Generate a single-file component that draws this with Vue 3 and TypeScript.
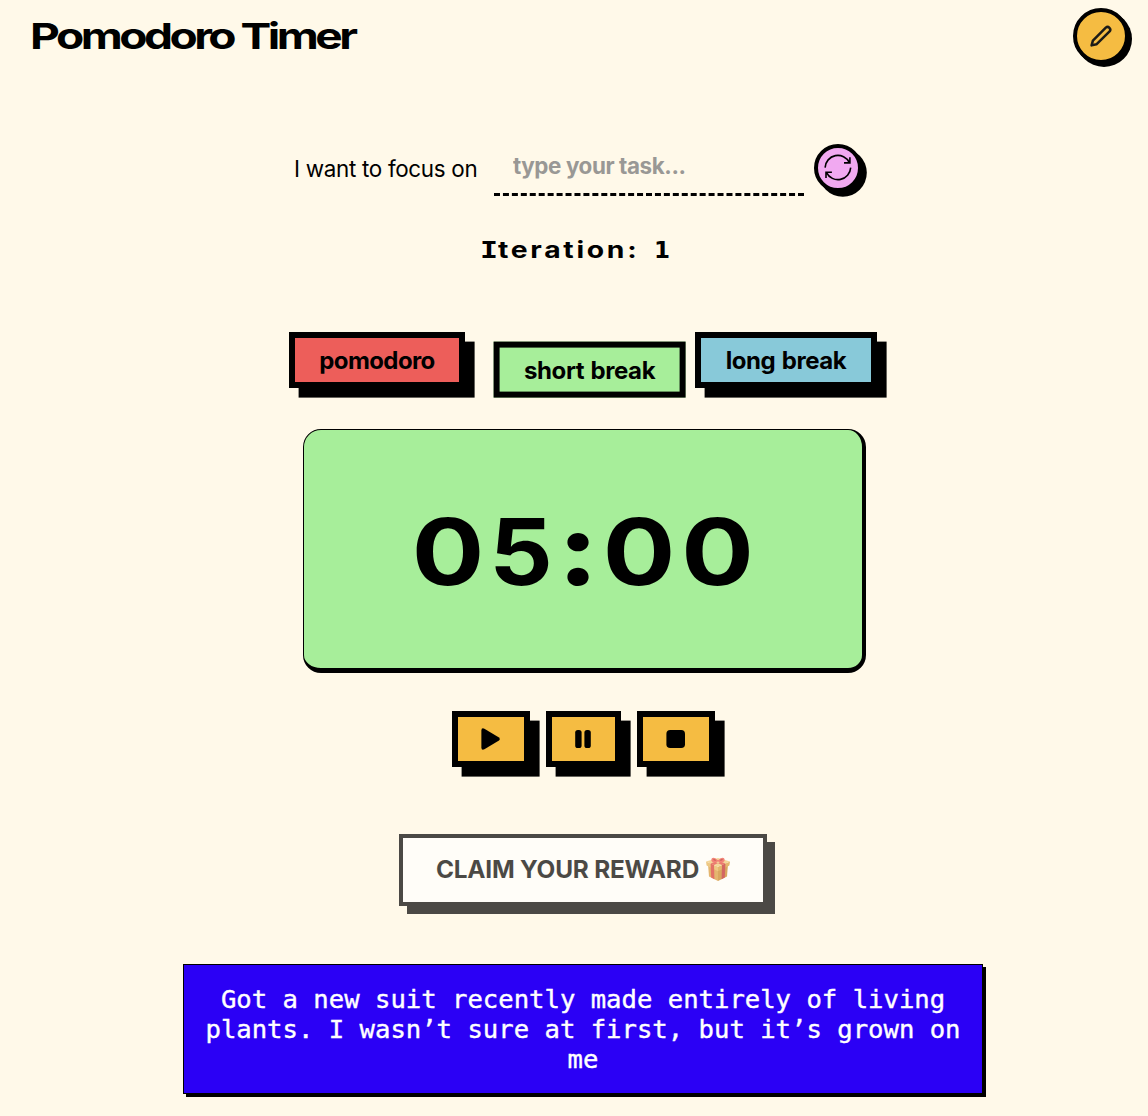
<script setup lang="ts">
import { ref } from 'vue'

type Mode = { id: string; label: string; color: string; width: number }

const modes: Mode[] = [
  { id: 'pomodoro', label: 'pomodoro', color: '#ed5e5a', width: 176 },
  { id: 'short', label: 'short break', color: '#a7ee9a', width: 192 },
  { id: 'long', label: 'long break', color: '#88c9d9', width: 182 },
]
const active = ref('short')
const task = ref('')
const iteration = ref(1)
const joke =
  'Got a new suit recently made entirely of living plants. I wasn’t sure at first, but it’s grown on me'
</script>

<template>
  <div class="page">
    <header class="header">
      <h1 class="title">Pomodoro Timer</h1>
      <button class="edit" aria-label="Edit">
        <svg width="28" height="28" viewBox="0 0 28 28" fill="none" stroke="#1c1b18" stroke-width="2.5" stroke-linejoin="round" stroke-linecap="round">
          <path d="M4.6 23.4 L5.9 18.6 L18.8 5.6 A2.7 2.7 0 0 1 22.6 9.4 L9.4 22.3 Z" />
        </svg>
      </button>
    </header>

    <main class="main">
      <div class="focus">
        <label class="focus-label" for="task">I want to focus on</label>
        <input id="task" v-model="task" class="task" placeholder="type your task..." />
        <button class="refresh" aria-label="Reset">
          <svg width="30" height="30" viewBox="0 0 30 30" fill="none" stroke="#000" stroke-width="1.6">
            <path d="M2.1 14.6 A12.8 12.8 0 0 1 26.4 9.6 M26.9 4.2 V9.9 H21" />
            <path d="M27.7 14.6 A12.8 12.8 0 0 1 3.5 19.6 M3 25 V19.3 H8.9" />
          </svg>
        </button>
      </div>

      <h2 class="iteration">
        <span class="slab">I</span><span class="word">teration:</span><span class="count">{{ iteration }}</span>
      </h2>

      <div class="modes">
        <button
          v-for="m in modes"
          :key="m.id"
          class="block mode"
          :class="[m.id, { pressed: active === m.id }]"
          :style="{ background: m.color, width: m.width + 'px' }"
          @click="active = m.id"
        >{{ m.label }}</button>
      </div>

      <div class="card">
        <span class="d zero">0</span><span class="d five">5</span><span class="d colon">:</span><span class="d zero mid">0</span><span class="d zero last">0</span>
      </div>

      <div class="controls">
        <button class="block control" aria-label="Play">
          <svg width="20" height="24" viewBox="0 0 20 24"><path d="M.4 3.6 Q.4 .4 3.4 1.8 L17.6 10.2 Q20 12 17.6 13.8 L3.4 22.2 Q.4 23.6 .4 20.4 Z" /></svg>
        </button>
        <button class="block control narrow" aria-label="Pause">
          <svg width="20" height="24" viewBox="0 0 20 24"><rect x="2.2" y="3" width="6.4" height="18" rx="2.6" /><rect x="11.4" y="3" width="6.4" height="18" rx="2.6" /></svg>
        </button>
        <button class="block control" aria-label="Stop">
          <svg width="20" height="24" viewBox="0 0 20 24"><rect x=".4" y="3" width="18.6" height="18" rx="3.8" /></svg>
        </button>
      </div>

      <button class="claim" disabled>
        <span class="claim-text">CLAIM YOUR REWARD</span>
        <svg class="gift" width="24" height="24" viewBox="0 0 24 24">
          <path d="M2 7 L12 12 V24 L3 19.5 Z" fill="#d99a3c" />
          <path d="M22 7 L12 12 V24 L21 19.5 Z" fill="#c98526" />
          <path d="M0 4.6 L12 9.8 V14.2 L.6 8.6 Z" fill="#e8b458" />
          <path d="M24 4.6 L12 9.8 V14.2 L23.4 8.6 Z" fill="#d99c3a" />
          <path d="M0 4.6 L12 1 L24 4.6 L12 9.8 Z" fill="#f0c878" />
          <path d="M4.6 6.6 L8 8.1 L8.4 22.2 L5.2 20.6 Z" fill="#d8392f" />
          <path d="M19.4 6.6 L16 8.1 L15.6 22.2 L18.8 20.6 Z" fill="#c22a28" />
          <path d="M4.6 6.6 L16 2 L18.6 3 L8 8.1 Z M19.4 6.6 L8 2 L5.4 3 L16 8.1 Z" fill="#e2463c" />
          <path d="M12 4.6 C9 6.4 5 5.4 5.4 2.8 C5.6 .2 8 -.4 12 3.2 C16 -.4 18.4 .2 18.6 2.8 C19 5.4 15 6.4 12 4.6 Z" fill="#ee5148" />
          <path d="M7 2.4 Q8.4 1.4 10.4 3.4 Q8.4 4.4 7 2.4 Z M17 2.4 Q15.6 1.4 13.6 3.4 Q15.6 4.4 17 2.4 Z" fill="#b8261f" />
        </svg>
      </button>

      <p class="joke">{{ joke }}</p>
    </main>
  </div>
</template>

<style>
body {
  background: #fff9e9;
}
</style>

<style scoped>
.page {
  height: 1116px;
  overflow: hidden;
  background: #fff9e9;
  color: #000;
  font-family: "Inter", "Liberation Sans", sans-serif;
}
button {
  box-sizing: border-box;
  padding: 0;
  color: #000;
  font-family: inherit;
  display: flex;
  align-items: center;
  justify-content: center;
}
.header {
  display: flex;
  justify-content: space-between;
  padding: 8px 19px 0 30px;
  height: 56px;
}
.title {
  margin: 0;
  font-size: 36px;
  font-weight: 750;
  line-height: 57px;
  letter-spacing: -2.75px;
  white-space: nowrap;
  transform: scaleX(1.28);
  transform-origin: left;
}
.edit {
  width: 56px;
  height: 56px;
  border: 4px solid #000;
  border-radius: 50%;
  background: #f5bc42;
  box-shadow: 3px 3px 0 #000;
}
.main {
  display: flex;
  flex-direction: column;
  align-items: center;
  padding: 80px 0 0 18px;
}
.focus {
  display: flex;
  align-items: center;
  width: 569px;
  height: 52px;
  align-self: flex-start;
  margin-left: 276px;
}
.focus-label {
  width: 200px;
  font-size: 22.4px;
  letter-spacing: -0.3px;
  white-space: nowrap;
  line-height: 48px;
  padding-bottom: 3px;
}
.task {
  box-sizing: border-box;
  width: 310px;
  height: 52px;
  margin: 0 10px 0 0;
  padding: 0 19px 6px;
  border: 0;
  border-bottom: 3px dashed #000;
  background: transparent;
  font-family: inherit;
  font-size: 22.4px;
  font-weight: 700;
  letter-spacing: -0.4px;
  outline: 0;
}
.task::placeholder {
  color: #999895;
  opacity: 1;
}
.refresh {
  flex: none;
  width: 48px;
  height: 48px;
  margin-bottom: 4px;
  border: 4px solid #000;
  border-radius: 50%;
  background: #f1a9f1;
  box-shadow: 4.8px 4.8px 0 #000;
}
.refresh svg {
  flex: none;
}
.iteration {
  display: flex;
  align-self: flex-start;
  align-items: baseline;
  width: 200px;
  height: 30px;
  margin: 39px 0 0 462px;
  font-size: 23px;
  font-weight: 750;
  line-height: 30px;
}
.iteration span {
  display: inline-block;
  transform-origin: left;
  white-space: nowrap;
}
.slab {
  width: 18px;
  font-family: "DejaVu Sans Mono", monospace;
  transform: scaleX(1.3);
}
.word {
  width: 156px;
  letter-spacing: 2.2px;
  transform: scaleX(1.23);
}
.count {
  font-family: "DejaVu Sans", sans-serif;
}
.block {
  height: 56px;
  border: 6px solid #000;
  box-shadow: 9.6px 9.6px 0 #000;
}
.modes {
  display: flex;
  gap: 19px;
  margin-top: 67px;
}
.mode {
  font-size: 24px;
  font-weight: 700;
  letter-spacing: -0.4px;
  word-spacing: 1px;
}
.pomodoro {
  letter-spacing: -0.6px;
}
.pressed {
  transform: translate(9.6px, 9.6px);
  box-shadow: none;
}
.card {
  box-sizing: border-box;
  display: flex;
  justify-content: center;
  width: 563px;
  height: 244px;
  margin: 41px 0 0 3px;
  border: 1px solid #000;
  border-width: 1px 4px 5px 1px;
  border-radius: 18px;
  background: #a7ee9a;
  font-size: 92px;
  font-weight: 700;
  line-height: 243px;
}
.d {
  display: flex;
  justify-content: center;
  height: 244px;
}
.zero {
  width: 78px;
  transform: scaleX(1.17);
}
.mid {
  width: 76px;
}
.last {
  width: 81px;
}
.five {
  width: 68px;
  transform: scaleX(1.08);
}
.colon {
  width: 46px;
  font-size: 100px;
  font-weight: 800;
  line-height: 237px;
  transform: scaleX(1.15);
}
.controls {
  display: flex;
  gap: 16px;
  margin-top: 38px;
}
.control {
  width: 78px;
  background: #f5bc42;
}
.narrow {
  width: 75px;
}
.claim {
  width: 368px;
  height: 72px;
  gap: 7px;
  margin-top: 67px;
  border: 4px solid #000;
  background: #fff;
  box-shadow: 8px 8px 0 #000;
  font-size: 24.4px;
  font-weight: 700;
  letter-spacing: -0.22px;
  opacity: 0.7;
}
.claim-text {
  padding-bottom: 2px;
}
.gift {
  margin-bottom: 2px;
  overflow: visible;
}
.joke {
  box-sizing: border-box;
  width: 800px;
  height: 130px;
  margin: 58px 0 0;
  padding: 19px 15px 0;
  border: 1px solid #000;
  background: #2b00f5;
  box-shadow: 3px 3px 0 #000;
  color: #fff;
  font-family: "DejaVu Sans Mono", monospace;
  font-size: 25.6px;
  line-height: 30px;
  text-align: center;
  -webkit-text-stroke: 0.4px #fff;
}
</style>
